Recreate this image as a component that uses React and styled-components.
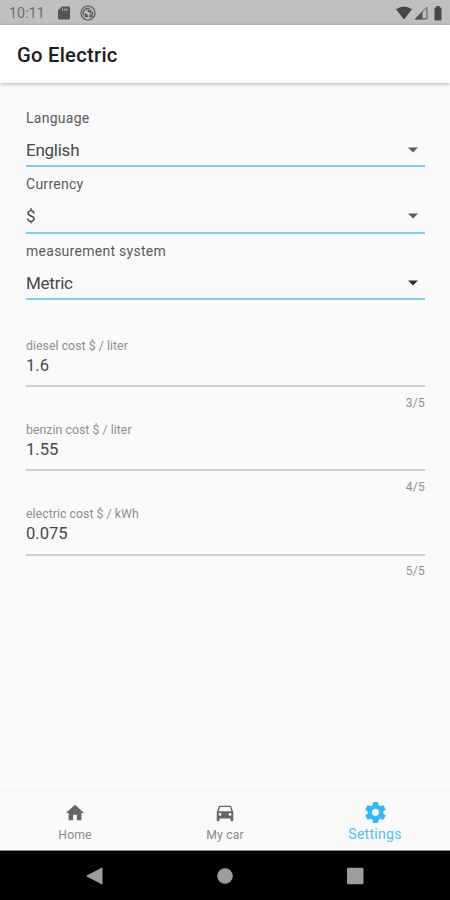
import React from "react";
import styled, { createGlobalStyle } from "styled-components";

const GlobalStyle = createGlobalStyle`
  * { box-sizing: border-box; }
  body { margin: 0; background: #fafafa; font-family: Roboto, sans-serif; }
`;

const Screen = styled.div`
  display: flex;
  flex-direction: column;
  width: 450px;
  height: 900px;
  overflow: hidden;
  background: #fafafa;
`;

const StatusBar = styled.header`
  display: flex;
  align-items: center;
  justify-content: space-between;
  height: 25px;
  flex: none;
  padding: 1px 6px 0 9px;
  background: #bfbfbf;
  color: #6c6c6c;
`;

const StatusGroup = styled.div`
  display: flex;
  align-items: center;
  gap: ${(p) => p.$gap}px;
`;

const Clock = styled.span`
  width: 39px;
  font-size: 14.2px;
  letter-spacing: 0.1px;
  white-space: nowrap;
`;

const Icon = styled.svg`
  display: block;
  flex: none;
  fill: currentColor;
`;

const AppBar = styled.div`
  display: flex;
  align-items: center;
  flex: none;
  height: 58px;
  padding: 2px 17px 0;
  background: #fff;
  box-shadow: 0 1px 4px rgba(0, 0, 0, 0.28);
`;

const Title = styled.h1`
  margin: 0;
  font-size: 20.2px;
  font-weight: 500;
  line-height: 24px;
  letter-spacing: 0.27px;
  color: #1c1c1c;
`;

const Content = styled.main`
  flex: 1;
  padding: 17.5px 25px 0 26px;
`;

const SelectGroup = styled.section`
  display: flex;
  flex-direction: column;
  height: 66.6px;
  padding-top: 7px;
  border-bottom: 2.2px solid #83ccf6;
`;

const SelectLabel = styled.label`
  font-size: 14px;
  line-height: 20px;
  letter-spacing: 0.27px;
  color: #5a5a5a;
`;

const SelectRow = styled.div`
  display: flex;
  align-items: center;
  justify-content: space-between;
  height: 36px;
  margin-top: 7px;
  padding-right: 7px;
  font-size: 17px;
  letter-spacing: -0.25px;
  color: #484848;
`;

const Arrow = styled.svg`
  display: block;
  fill: ${(p) => (p.$dark ? "#303030" : "#5c5c5c")};
`;

const Fields = styled.div`
  margin-top: 37.5px;
`;

const Field = styled.section`
  display: flex;
  flex-direction: column;
  height: 84.3px;
`;

const FieldLabel = styled.label`
  height: 16px;
  font-size: 12.3px;
  line-height: 16px;
  letter-spacing: 0.04px;
  color: #8e8e8e;
`;

const FieldValue = styled.div`
  height: 33.4px;
  padding-top: 1px;
  font-size: 16.6px;
  line-height: 21px;
  letter-spacing: 0;
  color: #484848;
  border-bottom: 2px solid #cecece;
`;

const Counter = styled.span`
  margin-top: 7.6px;
  font-size: 12px;
  line-height: 16px;
  letter-spacing: 0.3px;
  text-align: right;
  color: #8f8f8f;
`;

const TabBar = styled.nav`
  display: grid;
  grid-template-columns: repeat(3, 1fr);
  flex: none;
  height: 61px;
  border-top: 1px solid #f2f2f2;
  border-bottom: 1px solid #8c8c8c;
  background: #fafafa;
`;

const Tab = styled.div`
  display: flex;
  flex-direction: column;
  align-items: center;
  padding-top: ${(p) => (p.$active ? 9 : 10.5)}px;
  color: ${(p) => (p.$active ? "#36b6fa" : "#666")};
`;

const TabLabel = styled.span`
  font-size: ${(p) => (p.$active ? 14.1 : 12.2)}px;
  line-height: 16px;
  margin-top: ${(p) => (p.$active ? 1 : 3.5)}px;
  letter-spacing: ${(p) => (p.$active ? 0.25 : 0.15)}px;
  color: ${(p) => (p.$active ? "#55bdf5" : "#8a8a8a")};
`;

const SystemBar = styled.footer`
  display: grid;
  grid-template-columns: 130px 130px;
  grid-auto-columns: 130px;
  grid-auto-flow: column;
  align-items: center;
  justify-items: center;
  justify-content: center;
  flex: none;
  height: 49px;
  background: #000;
  color: #9d9d9d;
`;

const selects = [
  { label: "Language", value: "English" },
  { label: "Currency", value: "$" },
  { label: "measurement system", value: "Metric", dark: true },
];

const fields = [
  { label: "diesel cost $ / liter", value: "1.6", count: "3/5" },
  { label: "benzin cost $ / liter", value: "1.55", count: "4/5" },
  { label: "electric cost $ / kWh", value: "0.075", count: "5/5" },
];

const tabs = [
  { label: "Home", size: 22, path: "M10 20v-6h4v6h5v-8h3L12 3 2 12h3v8z" },
  {
    label: "My car",
    size: 22,
    path: "M18.92 5.01C18.72 4.42 18.16 4 17.5 4h-11c-.66 0-1.21.42-1.42 1.01L3 11v9c0 .55.45 1 1 1h1c.55 0 1-.45 1-1v-2h12v2c0 .55.45 1 1 1h1c.55 0 1-.45 1-1v-9l-2.08-5.99zM6.5 15a1.5 1.5 0 1 1 0-3 1.5 1.5 0 0 1 0 3zm11 0a1.5 1.5 0 1 1 0-3 1.5 1.5 0 0 1 0 3zM5 10l1.5-4.5h11L19 10H5z",
  },
  {
    label: "Settings",
    size: 25,
    active: true,
    path: "M19.43 12.98c.04-.32.07-.64.07-.98s-.03-.66-.07-.98l2.11-1.65c.19-.15.24-.42.12-.64l-2-3.46c-.12-.22-.39-.3-.61-.22l-2.49 1c-.52-.4-1.08-.73-1.69-.98l-.38-2.65C14.46 2.18 14.25 2 14 2h-4c-.25 0-.46.18-.49.42l-.38 2.65c-.61.25-1.17.59-1.69.98l-2.49-1c-.23-.09-.49 0-.61.22l-2 3.46c-.13.22-.07.49.12.64l2.11 1.65c-.04.32-.07.65-.07.98s.03.66.07.98l-2.11 1.65c-.19.15-.24.42-.12.64l2 3.46c.12.22.39.3.61.22l2.49-1c.52.4 1.08.73 1.69.98l.38 2.65c.03.24.24.42.49.42h4c.25 0 .46-.18.49-.42l.38-2.65c.61-.25 1.17-.59 1.69-.98l2.49 1c.23.09.49 0 .61-.22l2-3.46c.12-.22.07-.49-.12-.64l-2.11-1.65zM12 15.5c-1.93 0-3.5-1.57-3.5-3.5s1.57-3.5 3.5-3.5 3.5 1.57 3.5 3.5-1.57 3.5-3.5 3.5z",
  },
];

export default function App() {
  return (
    <>
      <GlobalStyle />
      <Screen>
        <StatusBar>
          <StatusGroup $gap={10}>
            <Clock>10:11</Clock>
            <Icon width="12" height="14" viewBox="0 0 12 14" color="#555">
              <path fillRule="evenodd" d="M4 .5h6.8q1.2 0 1.2 1.2v10.6q0 1.2-1.2 1.2H1.2Q0 13.5 0 12.3V4.5zM4 2.5v2.2h1.1V2.5zm2.2 0v2.2h1.1V2.5zm2.2 0v2.2h1.1V2.5z" />
            </Icon>
            <Icon width="16" height="16" viewBox="0 0 16 16" color="#555">
              <circle cx="8" cy="8" r="7" fill="none" stroke="currentColor" strokeWidth="1.2" />
              <path d="M3.6 10.2A4.8 4.8 0 0 1 9.5 3.7M12.4 6.8a4.6 4.6 0 0 1-3.2 5.6" fill="none" stroke="currentColor" strokeWidth="1.3" />
              <path d="M6.3 5l4.8-.2.6 4.2-2-1.3zM5 7.8l2 1.5 1.6 2.6-4 .3z" />
              <path d="M9.6 9.4l2.8 2.6" stroke="currentColor" strokeWidth="1.3" />
            </Icon>
          </StatusGroup>
          <StatusGroup $gap={2}>
            <Icon width="16" height="14" viewBox="0 0 16 14" color="#454545">
              <path d="M0 3.3Q8-2.2 16 3.3L8 13.5z" />
            </Icon>
            <Icon width="14" height="14" viewBox="0 0 14 14" color="#555">
              <path d="M1.4 12.9L13 1.3v11.6z" fill="none" stroke="currentColor" strokeWidth="1" />
              <path d="M.5 13.5L8.6 5.3v8.2z" />
            </Icon>
            <Icon width="14" height="15" viewBox="0 0 14 15" color="#484848">
              <path d="M6.3 0h3.4v1.5h.8q1 0 1 1v11q0 1-1 1h-5q-1 0-1-1v-11q0-1 1-1h.8z" />
            </Icon>
          </StatusGroup>
        </StatusBar>
        <AppBar>
          <Title>Go Electric</Title>
        </AppBar>
        <Content>
          {selects.map((s) => (
            <SelectGroup key={s.label}>
              <SelectLabel>{s.label}</SelectLabel>
              <SelectRow>
                {s.value}
                <Arrow width="10" height="6" viewBox="0 0 10 6" $dark={s.dark}>
                  <path d="M0 .4h10L5 5.6z" />
                </Arrow>
              </SelectRow>
            </SelectGroup>
          ))}
          <Fields>
            {fields.map((f) => (
              <Field key={f.label}>
                <FieldLabel>{f.label}</FieldLabel>
                <FieldValue>{f.value}</FieldValue>
                <Counter>{f.count}</Counter>
              </Field>
            ))}
          </Fields>
        </Content>
        <TabBar>
          {tabs.map((t) => (
            <Tab key={t.label} $active={t.active}>
              <Icon width={t.size} height={t.size} viewBox="0 0 24 24">
                <path fillRule="evenodd" d={t.path} />
              </Icon>
              <TabLabel $active={t.active}>{t.label}</TabLabel>
            </Tab>
          ))}
        </TabBar>
        <SystemBar>
          <Icon width="18" height="18" viewBox="0 0 18 18">
            <path d="M16 1v16L.8 9z" stroke="currentColor" strokeLinejoin="round" />
          </Icon>
          <Icon width="16" height="16" viewBox="0 0 16 16">
            <circle cx="8" cy="8" r="7.8" />
          </Icon>
          <Icon width="18" height="18" viewBox="0 0 18 18">
            <rect x="1" y="0.8" width="16.5" height="16.5" rx="1.3" />
          </Icon>
        </SystemBar>
      </Screen>
    </>
  );
}
